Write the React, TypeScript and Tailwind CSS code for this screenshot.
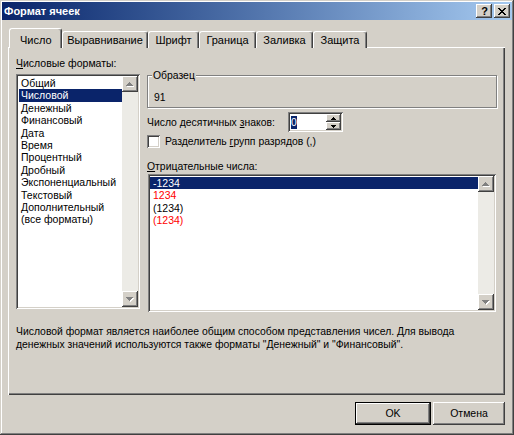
import React from "react";

const raised =
  "shadow-[inset_-1px_-1px_#404040,inset_1px_1px_#ffffff,inset_-2px_-2px_#808080,inset_2px_2px_#d4d0c8]";
const sunken =
  "shadow-[inset_1px_1px_#808080,inset_-1px_-1px_#ffffff,inset_2px_2px_#404040,inset_-2px_-2px_#d4d0c8]";

function ScrollArrow({ dir }: { dir: "up" | "down" }) {
  const rows = dir === "up" ? [3, 2, 1, 0] : [0, 1, 2, 3];
  return (
    <div className={`w-[16px] h-[16px] bg-[#d4d0c8] ${raised} flex items-center justify-center`}>
      <svg width="8" height="5" viewBox="0 0 8 5" shapeRendering="crispEdges">
        {rows.map((off, i) => (
          <rect key={"w" + i} x={off + 1} y={i + 1} width={7 - off * 2} height={1} fill="#ffffff" />
        ))}
        {rows.map((off, i) => (
          <rect key={"g" + i} x={off} y={i} width={7 - off * 2} height={1} fill="#808080" />
        ))}
      </svg>
    </div>
  );
}

function ScrollBar() {
  return (
    <div className="w-[16px] h-full flex flex-col">
      <ScrollArrow dir="up" />
      <div className="flex-1 bg-[#ecebe6]" />
      <ScrollArrow dir="down" />
    </div>
  );
}

function SpinArrow({ dir }: { dir: "up" | "down" }) {
  const rows = dir === "up" ? [2, 1, 0] : [0, 1, 2];
  return (
    <div className={`w-[15px] h-[8px] bg-[#d4d0c8] ${raised} flex items-center justify-center`}>
      <svg width="5" height="3" viewBox="0 0 5 3" shapeRendering="crispEdges">
        {rows.map((off, i) => (
          <rect key={i} x={off} y={i} width={5 - off * 2} height={1} fill="#000000" />
        ))}
      </svg>
    </div>
  );
}

function Tab({ label, selected, w }: { label: string; selected?: boolean; w: string }) {
  if (selected) {
    return (
      <div
        className={`${w} h-[20px] relative z-10 bg-[#d4d0c8] border-t border-l border-r border-t-white border-l-white border-r-[#404040] rounded-t-[3px] shadow-[inset_-1px_0_#808080] pt-[5px] pl-[10px] leading-[13px]`}
      >
        {label}
      </div>
    );
  }
  return (
    <div
      className={`${w} h-[17px] bg-[#d4d0c8] border-t border-l border-r border-t-white border-l-white border-r-[#404040] rounded-t-[3px] shadow-[inset_-1px_0_#808080] pt-[2px] text-center leading-[13px]`}
    >
      {label}
    </div>
  );
}

const formats = [
  "Общий",
  "Числовой",
  "Денежный",
  "Финансовый",
  "Дата",
  "Время",
  "Процентный",
  "Дробный",
  "Экспоненциальный",
  "Текстовый",
  "Дополнительный",
  "(все форматы)",
];

const negatives: { t: string; red: boolean }[] = [
  { t: "-1234", red: false },
  { t: "1234", red: true },
  { t: "(1234)", red: false },
  { t: "(1234)", red: true },
];

export default function App() {
  return (
    <div className="w-[514px] h-[435px] bg-[#d4d0c8] p-[2px] shadow-[inset_-1px_-1px_#404040,inset_1px_1px_#d4d0c8,inset_-2px_-2px_#808080,inset_2px_2px_#ffffff] font-['Liberation_Sans',Arial,sans-serif] text-[10.4px] text-black select-none overflow-hidden">
      {/* Title bar */}
      <div className="h-[18px] flex items-center bg-gradient-to-r from-[#0a246a] to-[#a6caf0] pl-[2px] pr-[2px]">
        <div className="flex-1 text-white font-bold text-[11px] leading-[13px]">Формат ячеек</div>
        <div className={`w-[16px] h-[14px] bg-[#d4d0c8] ${raised} flex items-center justify-center font-bold text-[11px] leading-[11px] pl-[1px]`}>
          ?
        </div>
        <div className={`ml-[2px] w-[16px] h-[14px] bg-[#d4d0c8] ${raised} flex items-center justify-center`}>
          <svg width="8" height="7" viewBox="0 0 8 7" shapeRendering="crispEdges">
            <path d="M0 0h2v1h-2zM6 0h2v1h-2zM1 1h2v1h-2zM5 1h2v1h-2zM2 2h4v1h-4zM3 3h2v1h-2zM2 4h4v1h-4zM1 5h2v1h-2zM5 5h2v1h-2zM0 6h2v1h-2zM6 6h2v1h-2z" fill="#000" />
          </svg>
        </div>
      </div>

      <div className="ml-[6px] mr-[7px]">
        {/* Tabs */}
        <div className="mt-[8px] h-[20px] flex items-end pl-[1px] text-[11px]">
          <Tab label="Число" selected w="w-[53px]" />
          <Tab label="Выравнивание" w="w-[86px]" />
          <Tab label="Шрифт" w="w-[51px]" />
          <Tab label="Граница" w="w-[57px]" />
          <Tab label="Заливка" w="w-[57px]" />
          <Tab label="Защита" w="w-[54px]" />
        </div>

        {/* Panel */}
        <div className="-mt-[1px] h-[348px] bg-[#d4d0c8] shadow-[inset_1px_1px_#ffffff,inset_-1px_-1px_#404040,inset_-2px_-2px_#808080] pt-[10px] px-[8px]">
          <div className="flex gap-[7px]">
            {/* Left column */}
            <div className="w-[124px]">
              <div className="leading-[13px] text-[10.5px]">
                <span className="underline">Ч</span>исловые форматы:
              </div>
              <div className={`mt-[4px] h-[235px] bg-white ${sunken} p-[2px] flex`}>
                <div className="flex-1 pt-[1px] pl-[1px] text-[10.5px]">
                  {formats.map((f, i) => (
                    <div
                      key={f}
                      className={`h-[12.4px] leading-[12.4px] pl-[2px] whitespace-nowrap ${
                        i === 1 ? "bg-[#0a246a] text-white" : ""
                      }`}
                    >
                      {f}
                    </div>
                  ))}
                </div>
                <ScrollBar />
              </div>
            </div>

            {/* Right column */}
            <div className="w-[350px]">
              <fieldset className="mt-[12px] border border-[#808080] shadow-[inset_1px_1px_#ffffff,1px_1px_#ffffff] px-[6px] pt-[9px] pb-[3px]">
                <legend className="ml-[-2px] px-[1px] bg-[#d4d0c8] leading-[13px]">Образец</legend>
                <div className="leading-[13px]">91</div>
              </fieldset>

              <div className="mt-[4px] h-[20px] flex items-center">
                <div className="w-[141px] leading-[13px]">
                  Число десятичных <span className="underline">з</span>наков:
                </div>
                <div className={`w-[55px] h-[20px] bg-white ${sunken} p-[2px] flex items-stretch`}>
                  <div className="flex-1 flex items-center pl-[1px]">
                    <span className="bg-[#0a246a] text-white leading-[13px] px-[0px]">0</span>
                  </div>
                  <div className="flex flex-col">
                    <SpinArrow dir="up" />
                    <SpinArrow dir="down" />
                  </div>
                </div>
              </div>

              <div className="mt-[3px] h-[13px] flex items-center">
                <div className={`w-[13px] h-[13px] bg-white ${sunken}`} />
                <div className="ml-[5px] leading-[13px]">
                  Разделитель <span className="underline">г</span>рупп разрядов (,)
                </div>
              </div>

              <div className="mt-[12px] leading-[13px]">
                <span className="underline">О</span>трицательные числа:
              </div>
              <div className={`mt-[1px] mx-[1px] h-[138px] bg-white ${sunken} p-[2px] flex`}>
                <div className="flex-1 pt-[1px] text-[10.5px]">
                  {negatives.map((n, i) => (
                    <div
                      key={i}
                      className={`h-[12.4px] leading-[12.4px] pl-[3px] ${
                        i === 0 ? "bg-[#0a246a] text-white" : n.red ? "text-[#ff0000]" : ""
                      }`}
                    >
                      {n.t}
                    </div>
                  ))}
                </div>
                <ScrollBar />
              </div>
            </div>
          </div>

          <div className="mt-[14px] leading-[12.5px]">
            Числовой формат является наиболее общим способом представления чисел. Для вывода
            <br />
            денежных значений используются также форматы "Денежный" и "Финансовый".
          </div>
        </div>

        {/* Buttons */}
        <div className="mt-[7px] flex justify-end gap-[2px] text-[10.5px]">
          <div className="w-[76px] h-[23px] border border-black">
            <div className={`w-full h-full ${raised} flex items-center justify-center leading-[13px]`}>OK</div>
          </div>
          <div className={`w-[72px] h-[23px] ${raised} flex items-center justify-center leading-[13px]`}>Отмена</div>
        </div>
      </div>
    </div>
  );
}
